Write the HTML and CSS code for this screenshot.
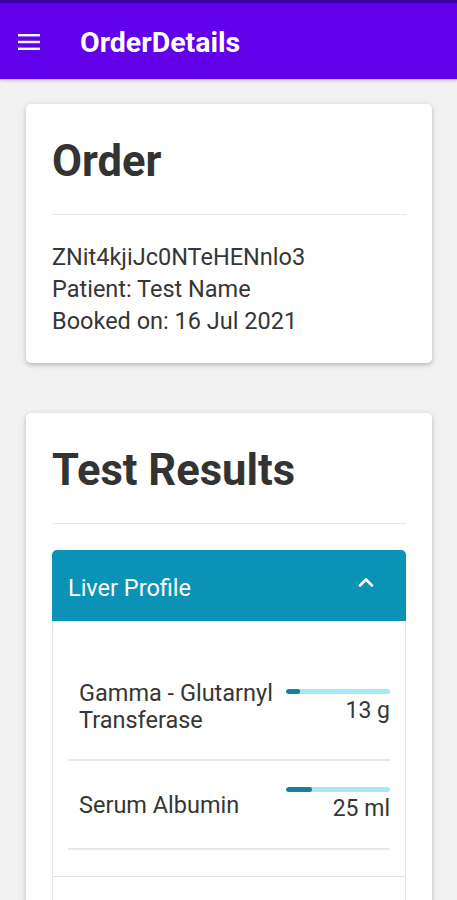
FILE: index.html
```html
<!DOCTYPE html>
<html>
<head>
<meta charset="utf-8">
<link rel="stylesheet" href="styles.css">
</head>
<body>
<header class="appbar">
  <svg class="menu-icon" width="22" height="16" viewBox="0 0 22 16"><rect x="0" y="0" width="22" height="2.4" fill="#fff"/><rect x="0" y="6.8" width="22" height="2.4" fill="#fff"/><rect x="0" y="13.6" width="22" height="2.4" fill="#fff"/></svg>
  <h1 class="appbar-title">OrderDetails</h1>
</header>
<main class="content">
  <section class="card">
    <h2 class="card-title">Order</h2>
    <hr class="divider">
    <div class="info">
      <div>ZNit4kjiJc0NTeHENnlo3</div>
      <div>Patient: Test Name</div>
      <div>Booked on: 16 Jul 2021</div>
    </div>
  </section>
  <section class="card">
    <h2 class="card-title">Test Results</h2>
    <hr class="divider">
    <div class="panel">
      <div class="panel-header">
        <span class="panel-title">Liver Profile</span>
        <svg class="chevron" width="16" height="10" viewBox="0 0 16 10"><polyline points="2,8.5 8,2.5 14,8.5" fill="none" stroke="#fff" stroke-width="2.6" stroke-linecap="round" stroke-linejoin="round"/></svg>
      </div>
      <div class="panel-body">
        <div class="result">
          <div class="result-name">Gamma - Glutarnyl<br>Transferase</div>
          <div class="result-value">
            <div class="bar"><div class="bar-fill" style="width:13%"></div></div>
            <div class="value">13 g</div>
          </div>
        </div>
        <div class="result">
          <div class="result-name">Serum Albumin</div>
          <div class="result-value">
            <div class="bar"><div class="bar-fill" style="width:25%"></div></div>
            <div class="value">25 ml</div>
          </div>
        </div>
      </div>
      <div class="panel-next"></div>
    </div>
  </section>
</main>
</body>
</html>
```

FILE: styles.css
```css
* { box-sizing: border-box; }
html, body { margin: 0; padding: 0; }
body {
  background: #f2f2f2;
  font-family: Roboto, "Liberation Sans", sans-serif;
  color: #363636;
  width: 457px;
  height: 900px;
  overflow: hidden;
}
.appbar {
  height: 79px;
  background: #6200ea;
  border-top: 3px solid #3c00a8;
  display: flex;
  align-items: center;
  padding: 0 0 0 18px;
  box-shadow: 0 1px 0 #c9b8f0, 0 2px 3px rgba(0,0,0,0.15);
  position: relative;
  z-index: 1;
}
.menu-icon { display: block; margin-top: 2px; }
.appbar-title {
  margin: 0 0 0 40px;
  color: #fff;
  font-size: 28.5px;
  font-weight: 700;
  line-height: 36px;
  margin-top: 4px;
}
.content {
  padding: 25px 25px 0 26px;
  display: flex;
  flex-direction: column;
  gap: 50px;
}
.card {
  background: #fff;
  border-radius: 5px;
  box-shadow: 0 2px 4px rgba(0,0,0,0.18), 0 1px 8px rgba(0,0,0,0.08);
  padding: 30px 26px 26px 26px;
}
.card-title {
  margin: 0;
  font-size: 43.5px;
  line-height: 56px;
  font-weight: 700;
  color: #333;
}
.divider {
  border: 0;
  border-top: 1px solid #e6e6e6;
  margin: 24px 0 26px 0;
}
.info {
  font-size: 23.5px;
  line-height: 32px;
  color: #363636;
}
.panel {
  border-radius: 5px 5px 0 0;
  overflow: hidden;
}
.panel-header {
  height: 71px;
  background: #0a93b6;
  display: flex;
  align-items: center;
  justify-content: space-between;
  padding: 0 32px 0 16px;
}
.panel-title {
  color: #fff;
  font-size: 23.5px;
  margin-top: 4px;
}
.chevron { display: block; margin-top: -8px; }
.panel-body {
  border-left: 1px solid #e3e3e3;
  border-right: 1px solid #e3e3e3;
  padding: 33px 15px 26px 15px;
}
.result {
  display: flex;
  align-items: center;
  justify-content: space-between;
  padding: 26px 0 25px 11px;
  border-bottom: 2px solid #e8e8e8;
}
.result-name {
  font-size: 23.5px;
  line-height: 27px;
  color: #363636;
}
.result-value {
  width: 104px;
  flex: none;
  display: flex;
  flex-direction: column;
  align-items: stretch;
}
.bar {
  height: 5px;
  border-radius: 3px;
  background: #a7e8f6;
  overflow: hidden;
}
.bar-fill {
  height: 100%;
  background: #137fa1;
  border-radius: 3px;
}
.value {
  text-align: right;
  font-size: 23px;
  line-height: 28px;
  margin-top: 3px;
  color: #363636;
}
.panel-next {
  height: 40px;
  border: 1px solid #e3e3e3;
  border-bottom: 0;
}
```
